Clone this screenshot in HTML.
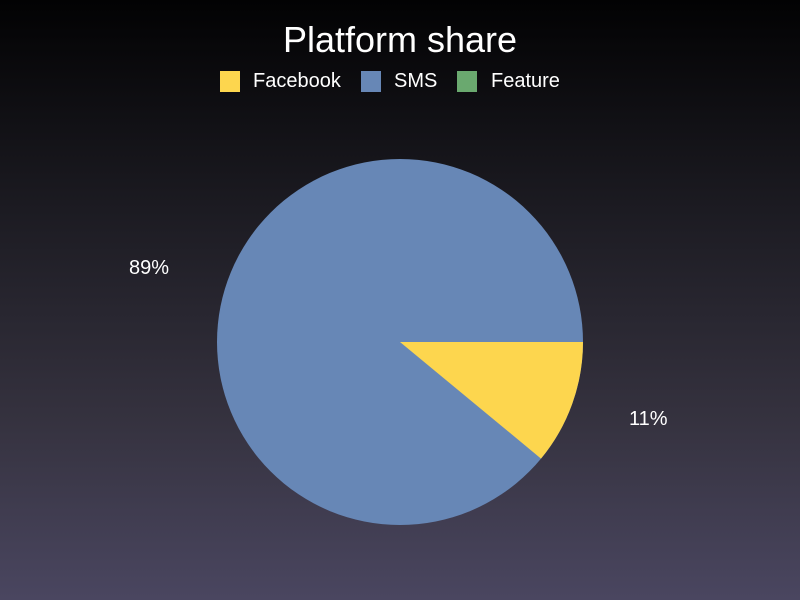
<!DOCTYPE html>
<html><head><meta charset="utf-8"><style>
html,body{margin:0;padding:0}
body{width:800px;height:600px;overflow:hidden;background:linear-gradient(to bottom,#020203 0%,#1c1b22 35%,#35323f 70%,#4a4660 100%);font-family:"Liberation Sans",sans-serif;color:#fff;position:relative}
.t{position:absolute;left:0;width:800px;text-align:center;top:19px;font-size:36px}
.lg{position:absolute;top:71px;height:21px;font-size:20px;line-height:21px}
.sw{position:absolute;top:71px;width:20px;height:21px}
.lb{position:absolute;font-size:20px}
</style></head><body>
<div class="t">Platform share</div>
<div class="sw" style="left:220px;background:#fdd64e"></div>
<div class="lg" style="left:253px">Facebook</div>
<div class="sw" style="left:361px;background:#6787b6"></div>
<div class="lg" style="left:394px">SMS</div>
<div class="sw" style="left:457px;background:#6aa96f"></div>
<div class="lg" style="left:491px">Feature</div>
<svg width="800" height="600" style="position:absolute;left:0;top:0">
<circle cx="400" cy="342" r="183" fill="#6787b6"/>
<path d="M400 342 L583 342 A183 183 0 0 1 541 458.6 Z" fill="#fdd64e"/>
</svg>
<div class="lb" style="left:129px;top:257px">89%</div>
<div class="lb" style="left:629px;top:408px">11%</div>
</body></html>
